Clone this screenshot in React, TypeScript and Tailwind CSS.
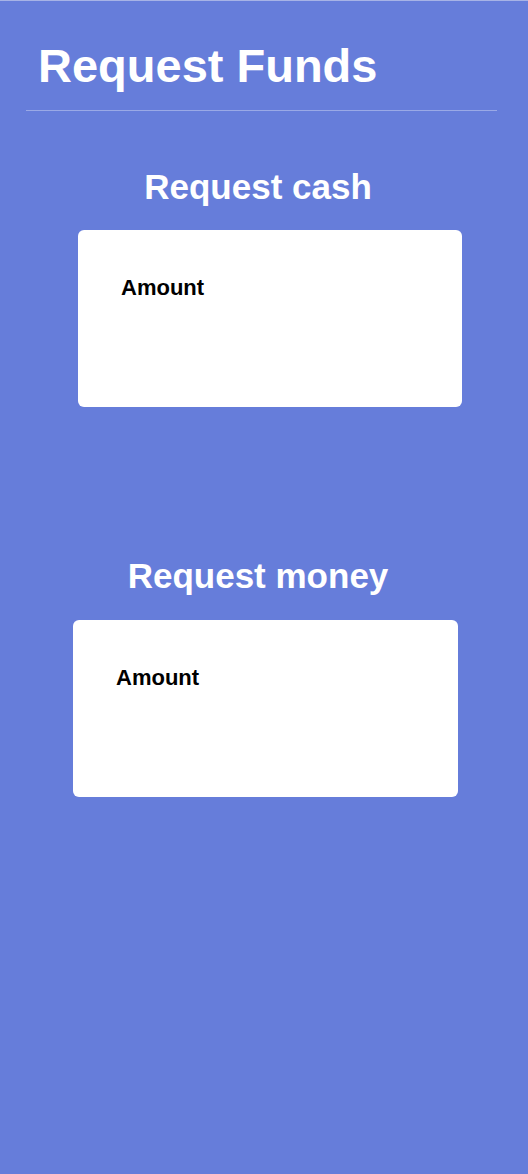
export default function App() {
  return (
    <div
      className="min-h-[1174px] w-full bg-[#667dda] border-t border-[#a7b3e6] text-white"
      style={{ fontFamily: '"Liberation Sans", Arial, sans-serif' }}
    >
      {/* header */}
      <div className="pt-[41px] pl-[38px]">
        <h1 className="text-[47px] font-bold leading-none">Request Funds</h1>
      </div>
      <div className="mt-[21px] ml-[26px] w-[471px] h-px bg-[#9aa9e6]"></div>

      {/* request cash */}
      <div className="mt-[58px] pr-[12px] text-center">
        <h2 className="text-[35px] font-bold leading-none">Request cash</h2>
      </div>
      <div className="mt-[26px] ml-[78px] w-[384px] h-[177px] rounded-md bg-white pt-[47px] pl-[43px]">
        <p className="text-[22px] font-bold leading-none text-black">Amount</p>
      </div>

      {/* request money */}
      <div className="mt-[151px] pr-[12px] text-center">
        <h2 className="text-[35px] font-bold leading-none">Request money</h2>
      </div>
      <div className="mt-[27px] ml-[73px] w-[385px] h-[177px] rounded-md bg-white pt-[47px] pl-[43px]">
        <p className="text-[22px] font-bold leading-none text-black">Amount</p>
      </div>
    </div>
  );
}
